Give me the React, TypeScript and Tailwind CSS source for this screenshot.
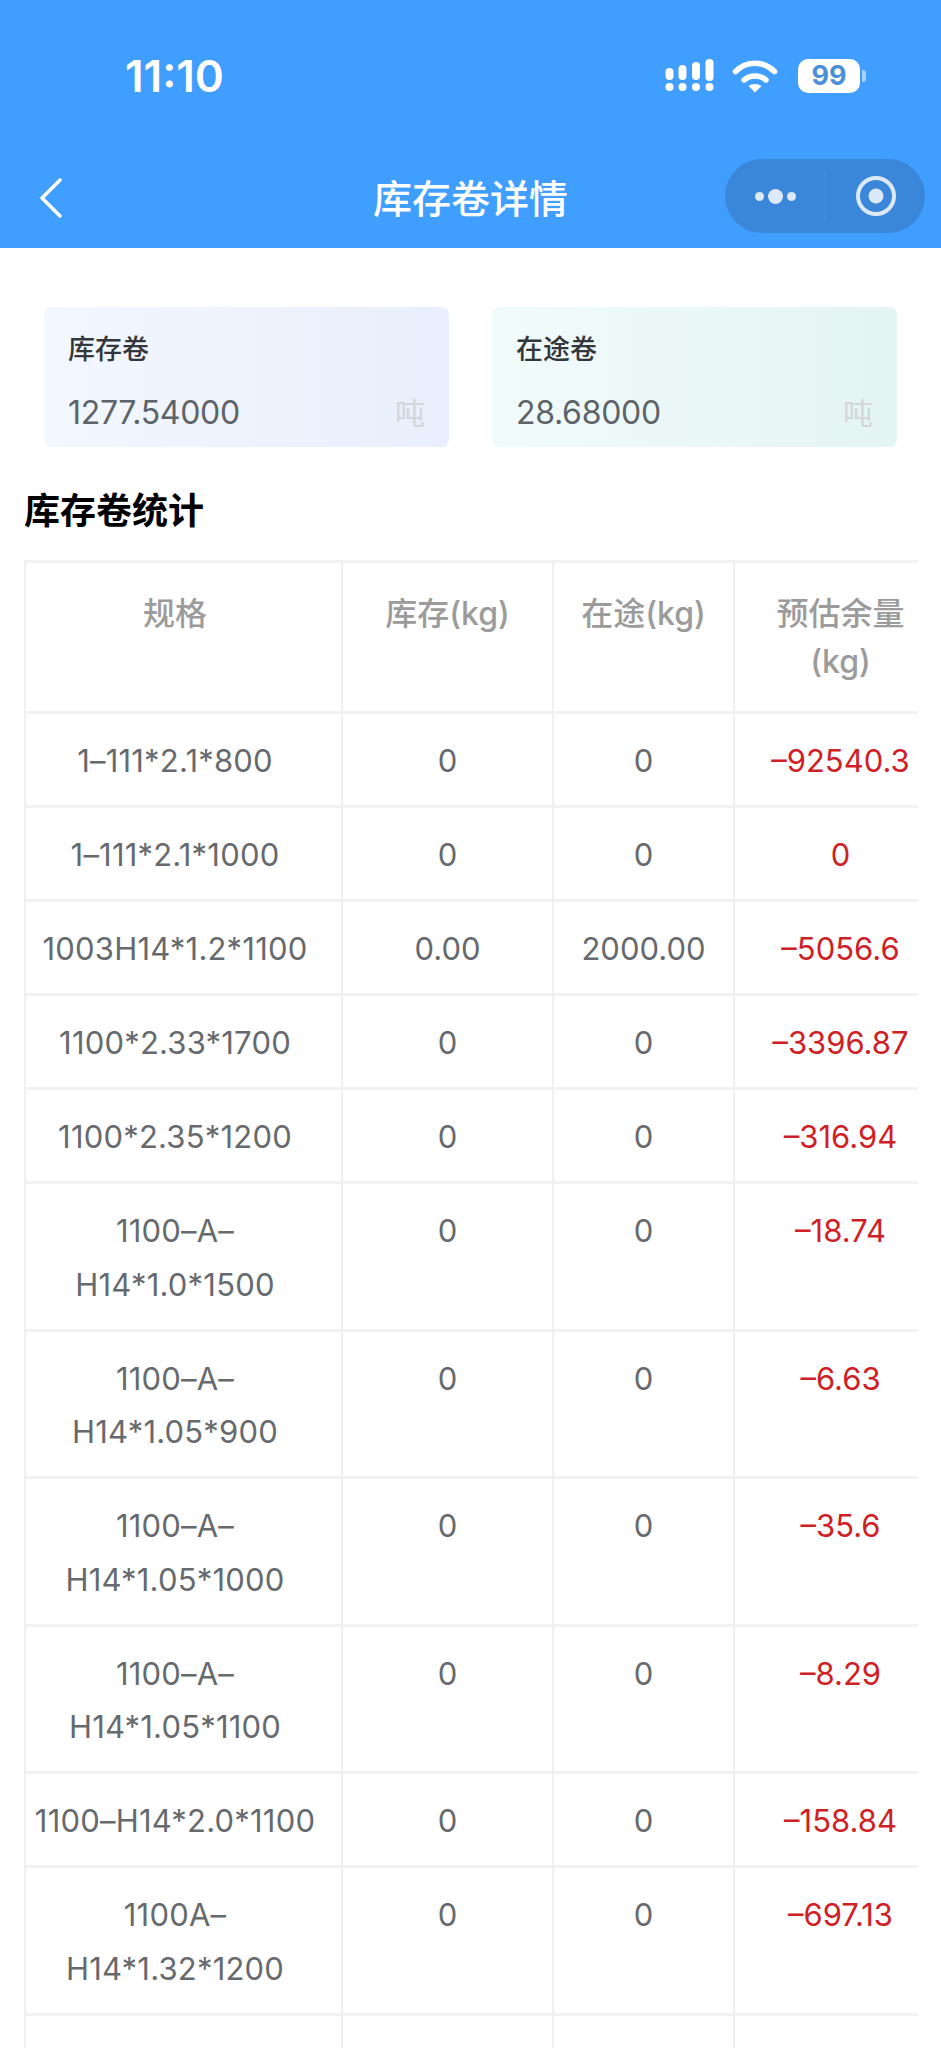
import React from "react";

const rows = [
  { spec: "1–111*2.1*800", stock: "0", transit: "0", left: "–92540.3" },
  { spec: "1–111*2.1*1000", stock: "0", transit: "0", left: "0" },
  { spec: "1003H14*1.2*1100", stock: "0.00", transit: "2000.00", left: "–5056.6" },
  { spec: "1100*2.33*1700", stock: "0", transit: "0", left: "–3396.87" },
  { spec: "1100*2.35*1200", stock: "0", transit: "0", left: "–316.94" },
  { spec: "1100–A–H14*1.0*1500", stock: "0", transit: "0", left: "–18.74" },
  { spec: "1100–A–H14*1.05*900", stock: "0", transit: "0", left: "–6.63" },
  { spec: "1100–A–H14*1.05*1000", stock: "0", transit: "0", left: "–35.6" },
  { spec: "1100–A–H14*1.05*1100", stock: "0", transit: "0", left: "–8.29" },
  { spec: "1100–H14*2.0*1100", stock: "0", transit: "0", left: "–158.84" },
  { spec: "1100A–H14*1.32*1200", stock: "0", transit: "0", left: "–697.13" },
  { spec: "", stock: "", transit: "", left: "" },
];

function SignalIcon() {
  return (
    <svg width="50" height="34" viewBox="0 0 50 34" fill="#fff">
      <circle cx="4.5" cy="28" r="4" />
      <circle cx="17.5" cy="28" r="4" />
      <circle cx="31" cy="28" r="4" />
      <circle cx="44.5" cy="28" r="4" />
      <rect x="0.5" y="9" width="8" height="12" rx="4" />
      <rect x="13.5" y="6" width="8" height="15" rx="4" />
      <rect x="27" y="3" width="8" height="18" rx="4" />
      <rect x="40.5" y="0" width="8" height="22" rx="4" />
    </svg>
  );
}

function WifiIcon() {
  return (
    <svg width="46" height="34" viewBox="0 0 46 34" fill="none" stroke="#fff" strokeLinecap="round" strokeWidth="5.5">
      <path d="M3.5 12.5C14.5 1.5 31.5 1.5 42.5 12.5" />
      <path d="M12 21C18 15.5 28 15.5 34 21" />
      <path d="M23 33.5L16.5 27C20 24.2 26 24.2 29.5 27Z" fill="#fff" stroke="none" />
    </svg>
  );
}

function Capsule() {
  return (
    <div className="flex h-[74px] w-[200px] -translate-y-[2px] items-center rounded-full bg-[#3a86d9]">
      <div className="flex h-[52px] flex-1 items-center justify-center gap-[4px] border-r border-[#4390e2]">
        <span className="h-[9px] w-[9px] rounded-full bg-[#dbe9f8]" />
        <span className="h-[15px] w-[15px] rounded-full bg-[#dbe9f8]" />
        <span className="h-[9px] w-[9px] rounded-full bg-[#dbe9f8]" />
      </div>
      <div className="flex h-full w-[99px] items-center justify-center">
        <svg width="40" height="40" viewBox="0 0 40 40" fill="#dbe9f8">
          <circle cx="20" cy="20" r="18" fill="none" stroke="#dbe9f8" strokeWidth="4" />
          <circle cx="20" cy="20" r="7.5" />
        </svg>
      </div>
    </div>
  );
}

function StatCard({ label, value, bg }: { label: string; value: string; bg: string }) {
  return (
    <div className={`h-[140px] flex-1 rounded-[8px] px-[24px] pt-[24px] ${bg}`}>
      <div className="text-[27px] leading-[38px] font-medium text-[#33373b]">{label}</div>
      <div className="mt-[25px] flex items-center justify-between">
        <span className="text-[32px] leading-[38px] tracking-[-0.3px] text-[#5d6369]">{value}</span>
        <span className="text-[30px] leading-[38px] text-[#d3d6da]">吨</span>
      </div>
    </div>
  );
}

export default function App() {
  return (
    <div
      className="h-[2048px] w-[941px] overflow-hidden bg-white"
      style={{ fontFamily: 'Inter, "Noto Sans CJK SC", sans-serif' }}
    >
      <header className="h-[248px] bg-[#409eff] text-white">
        <div className="flex h-[152px] items-center justify-between pr-[75px] pl-[125px]">
          <span className="text-[44px] leading-none font-semibold">11:10</span>
          <div className="flex items-center">
            <SignalIcon />
            <div className="ml-[17px]">
              <WifiIcon />
            </div>
            <div className="ml-[20px] flex h-[34px] w-[62px] items-center justify-center rounded-[10px] bg-white text-[27px] font-bold text-[#4a8fd8]">
              99
            </div>
            <div className="ml-[2px] h-[12px] w-[4px] rounded-r-[3px] bg-[#a9d2fb]" />
          </div>
        </div>
        <div className="grid h-[92px] grid-cols-[1fr_auto_1fr] items-center">
          <div className="pl-[39px]">
            <svg width="24" height="40" viewBox="0 0 24 40" fill="none" stroke="#fff" strokeWidth="3.5" strokeLinecap="round" strokeLinejoin="round">
              <path d="M21 2L3 20L21 38" />
            </svg>
          </div>
          <div className="text-[39px] leading-none font-medium">库存卷详情</div>
          <div className="flex justify-end pr-[16px]">
            <Capsule />
          </div>
        </div>
      </header>

      <div className="mt-[59px] flex gap-[43px] pr-[44px] pl-[44px]">
        <StatCard label="库存卷" value="1277.54000" bg="bg-gradient-to-r from-[#f3f7ff] to-[#e8eefb]" />
        <StatCard label="在途卷" value="28.68000" bg="bg-gradient-to-r from-[#f2fbfc] to-[#e3f4f2]" />
      </div>

      <h2 className="mt-[42px] ml-[24px] text-[36px] leading-[44px] font-bold text-black">库存卷统计</h2>

      <div className="mt-[27px] ml-[24px] w-[894px] overflow-hidden">
        <table className="w-[920px] table-fixed border-separate border-spacing-0 border-t-[3px] border-l-2 border-[#f0f1f2] text-center">
          <colgroup>
            <col className="w-[317px]" />
            <col className="w-[211px]" />
            <col className="w-[181px]" />
            <col className="w-[211px]" />
          </colgroup>
          <thead>
            <tr className="text-[32px] leading-[48px] text-[#9b9b9b]">
              <th className="border-r-2 border-b-[3px] border-[#f0f1f2] pt-[27px] pb-[25px] align-top font-medium">
                <div className="pr-[17px]">规格</div>
              </th>
              <th className="border-r-2 border-b-[3px] border-[#f0f1f2] pt-[27px] pb-[25px] align-top font-medium">库存(kg)</th>
              <th className="border-r-2 border-b-[3px] border-[#f0f1f2] pt-[27px] pb-[25px] align-top font-medium">在途(kg)</th>
              <th className="border-b-[3px] border-[#f0f1f2] px-[30px] pt-[27px] pb-[25px] align-top font-medium">预估余量(kg)</th>
            </tr>
          </thead>
          <tbody className="text-[31px] leading-[53.5px] text-[#666a6e]">
            {rows.map((r, i) => (
              <tr key={i}>
                <td className="border-r-2 border-b-[3px] border-[#f0f1f2] pt-[20px] pb-[17.5px] align-top">
                  <div className="mr-[17px] min-h-[53.5px] tracking-[0.2px]">{r.spec}</div>
                </td>
                <td className="border-r-2 border-b-[3px] border-[#f0f1f2] pt-[20px] pb-[17.5px] align-top">{r.stock}</td>
                <td className="border-r-2 border-b-[3px] border-[#f0f1f2] pt-[20px] pb-[17.5px] align-top">{r.transit}</td>
                <td className="border-b-[3px] border-[#f0f1f2] pt-[20px] pb-[17.5px] align-top text-[#cf2026]">{r.left}</td>
              </tr>
            ))}
          </tbody>
        </table>
      </div>
    </div>
  );
}
